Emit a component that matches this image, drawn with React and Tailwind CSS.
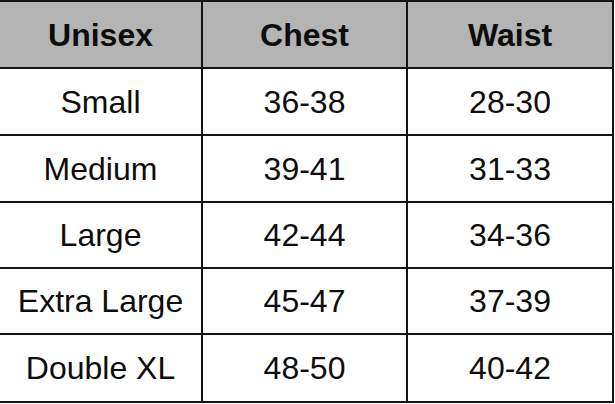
export default function App() {
  const rows = [
    ["Small", "36-38", "28-30"],
    ["Medium", "39-41", "31-33"],
    ["Large", "42-44", "34-36"],
    ["Extra Large", "45-47", "37-39"],
    ["Double XL", "48-50", "40-42"],
  ];
  const heights = ["h-[67px]", "h-[67px]", "h-[66px]", "h-[66px]", "h-[68px]"];
  return (
    <div className="w-[615px] h-[404px] bg-white overflow-hidden" style={{ fontFamily: '"Liberation Sans", Arial, sans-serif' }}>
      <div className="w-[614px] border-t-2 border-b-2 border-r-2 border-[#141414] text-[#0d0d0d] text-[32px]">
        <div className="grid grid-cols-[203px_205px_204px] bg-[#b4b4b4] font-bold h-[65px]">
          <div className="flex items-center justify-center border-r-2 border-[#141414]">Unisex</div>
          <div className="flex items-center justify-center border-r-2 border-[#141414]">Chest</div>
          <div className="flex items-center justify-center">Waist</div>
        </div>
        {rows.map((r, i) => (
          <div key={i} className={`grid grid-cols-[203px_205px_204px] border-t-2 border-[#141414] ${heights[i]}`}>
            <div className="flex items-center justify-center border-r-2 border-[#141414]">{r[0]}</div>
            <div className="flex items-center justify-center border-r-2 border-[#141414]">{r[1]}</div>
            <div className="flex items-center justify-center">{r[2]}</div>
          </div>
        ))}
      </div>
    </div>
  );
}
